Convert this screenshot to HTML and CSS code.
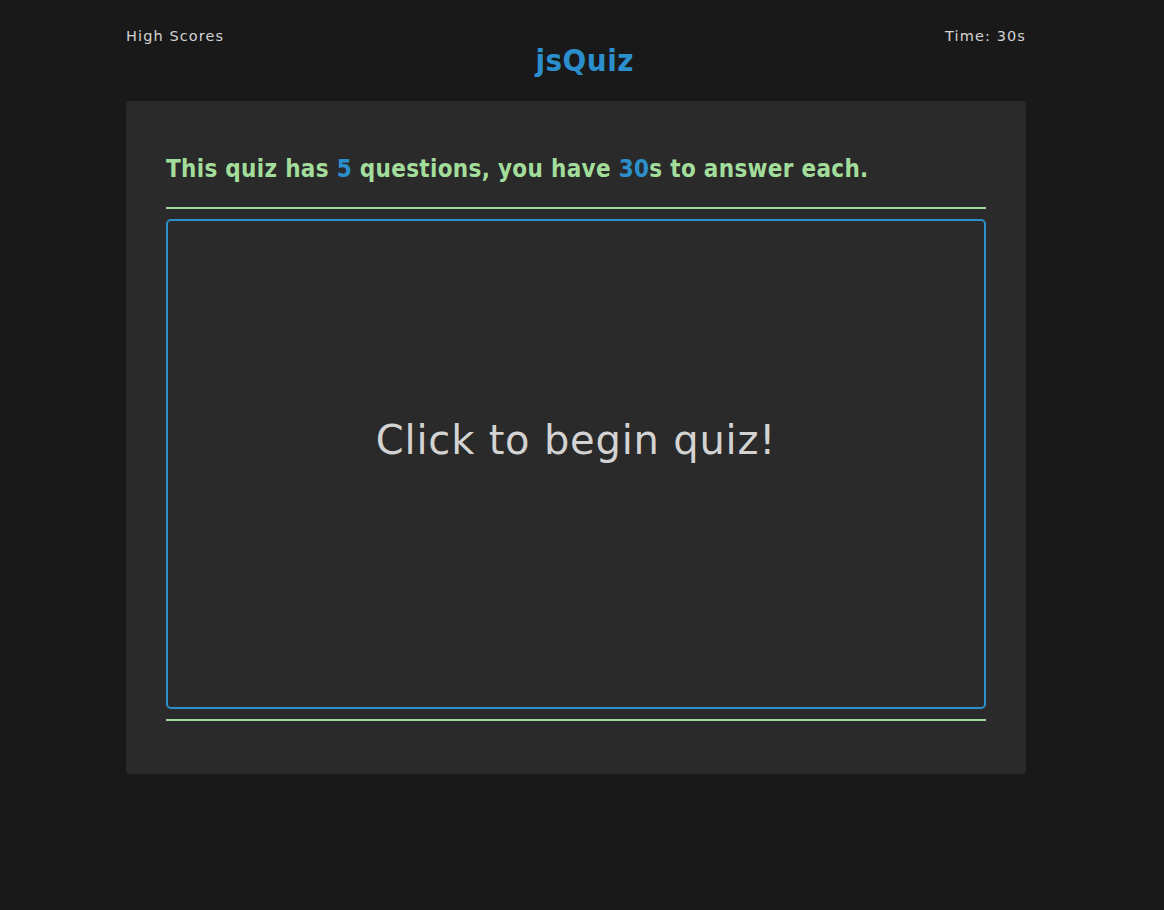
FILE: index.html
```html
<!DOCTYPE html>
<html>
<head>
<meta charset="utf-8">
<link rel="stylesheet" href="styles.css">
</head>
<body>
<div class="page">
  <header class="top">
    <a class="scores">High Scores</a>
    <h1 class="title">jsQuiz</h1>
    <div class="timer">Time: 30s</div>
  </header>
  <main class="card">
    <h2 class="intro">This quiz has <span class="hl">5</span> questions, you have <span class="hl">30</span>s to answer each.</h2>
    <hr class="rule">
    <div class="start">Click to begin quiz!</div>
    <hr class="rule">
  </main>
</div>
</body>
</html>
```
FILE: styles.css
```css
html, body {
  margin: 0;
  padding: 0;
  background: #191919;
}
body {
  font-family: "DejaVu Sans Condensed", "DejaVu Sans", sans-serif;
  color: #d3d3d3;
}
.page {
  width: 900px;
  margin-left: 126px;
}
.top {
  display: flex;
  justify-content: space-between;
  align-items: flex-start;
  padding-top: 27px;
  height: 101px;
  box-sizing: border-box;
}
.scores, .timer {
  font-family: "DejaVu Sans", sans-serif;
  font-size: 14.5px;
  line-height: 18px;
  color: #d3d3d3;
  letter-spacing: 1.1px;
}
.title {
  margin: 15px 0 0 0;
  font-size: 31px;
  line-height: 36px;
  font-weight: bold;
  color: #2b8fcd;
  letter-spacing: 0.5px;
}
.card {
  background: #2a2a2a;
  border-radius: 4px;
  padding: 53px 40px 53px 40px;
  height: 673px;
  box-sizing: border-box;
}
.intro {
  margin: 0;
  font-size: 24px;
  line-height: 30px;
  font-weight: bold;
  color: #a3dd9b;
  letter-spacing: 0.3px;
}
.hl {
  color: #2b8fcd;
}
.rule {
  margin: 0;
  border: none;
  height: 2px;
  background: #a3dd9b;
}
.intro + .rule {
  margin-top: 23px;
}
.start {
  margin: 10px 0;
  height: 490px;
  box-sizing: border-box;
  border: 2px solid #2b8fcd;
  border-radius: 5px;
  padding-bottom: 48px;
  display: flex;
  align-items: center;
  justify-content: center;
  font-family: "DejaVu Sans", sans-serif;
  font-size: 40px;
  color: #d3d3d3;
  letter-spacing: 0.8px;
}
```
